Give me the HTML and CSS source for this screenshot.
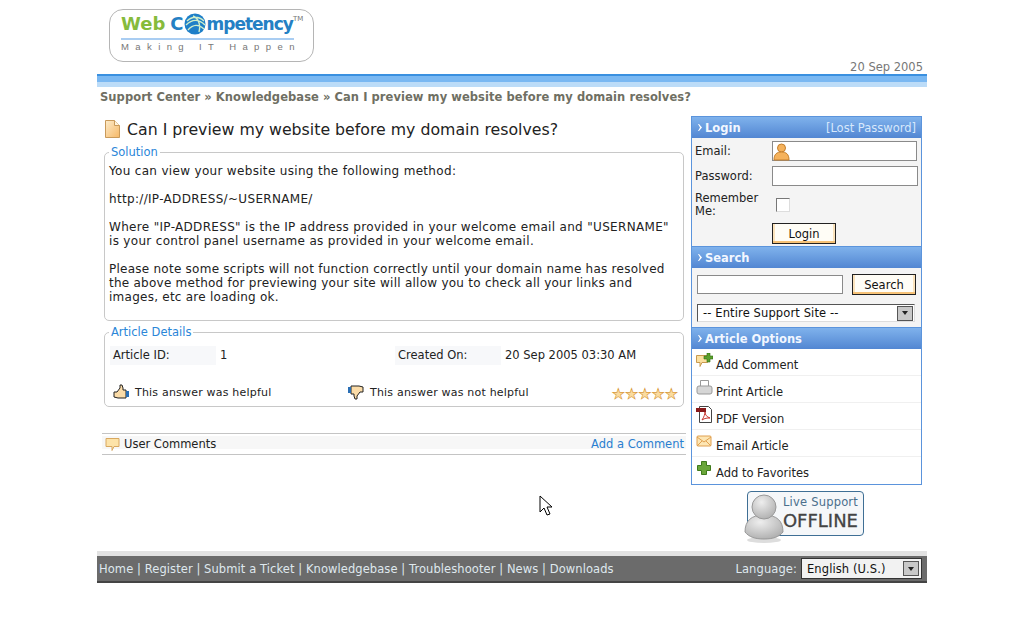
FILE: index.html
```html
<!DOCTYPE html>
<html lang="en">
<head>
  <meta charset="UTF-8" />
  <title>Can I preview my website before my domain resolves?</title>
  <link rel="stylesheet" href="styles.css">
</head>
<body>
  <div class="page">
    <div class="header">
      <div class="logo">
        <div class="logo-name"><span class="green">Web</span><span class="blue c">C</span><svg class="globe" width="22" height="22" viewBox="0 0 22 22"><circle cx="11" cy="11" r="10.500" fill="#1e7fc8"/><path d="M3 8c5-5 12-5 17 0M2 12c6-6 13-6 19 0M4 17c5-6 11-6 16-1M9 3c5 2 8 8 6 16" fill="none" stroke="#cfeecb" stroke-width="1.400"/></svg><span class="blue rest">mpetency</span><sup>TM</sup></div>
        <div class="logo-line"></div>
        <div class="logo-tag">Making IT Happen</div>
      </div>
      <div class="date">20 Sep 2005</div>
    </div>
    <div class="stripe"></div>
    <div class="crumbs">Support Center » Knowledgebase » Can I preview my website before my domain resolves?</div>

    <div class="columns">
      <div class="main">
        <h1>
          <svg width="15" height="18" viewBox="0 0 15 18"><defs><linearGradient id="doc" x1="0" y1="0" x2="1" y2="1"><stop offset="0" stop-color="#fdeccb"/><stop offset="1" stop-color="#f6b866"/></linearGradient></defs><path d="M.5.5h9l5 5v12H.5z" fill="url(#doc)" stroke="#c99a5a"/><path d="M9.500.5v5h5" fill="#fff3dc" stroke="#c99a5a"/></svg>
          Can I preview my website before my domain resolves?
        </h1>

        <fieldset class="box solution">
          <legend>Solution</legend>
          <p>You can view your website using the following method:</p>
          <p>http://IP-ADDRESS/~USERNAME/</p>
          <p>Where "IP-ADDRESS" is the IP address provided in your welcome email and "USERNAME" is your control panel username as provided in your welcome email.</p>
          <p>Please note some scripts will not function correctly until your domain name has resolved the above method for previewing your site will allow you to check all your links and images, etc are loading ok.</p>
        </fieldset>

        <fieldset class="box details">
          <legend>Article Details</legend>
          <div class="meta">
            <span class="meta-label">Article ID:</span><span class="meta-value id">1</span>
            <span class="meta-label">Created On:</span><span class="meta-value">20 Sep 2005 03:30 AM</span>
          </div>
          <div class="rating">
            <span class="vote up">
              <svg width="16" height="16" viewBox="0 0 16 16"><path d="M1 8h3l3-4V1h2l1 3v2h3v8H5l-4-1z" fill="#fbdca8" stroke="#222"/><path d="M13 7h3v6h-3z" fill="#2a6fb5"/></svg>
              This answer was helpful
            </span>
            <span class="vote down">
              <svg width="16" height="16" viewBox="0 0 16 16"><path d="M15 8h-3l-3 4v3H7l-1-3v-2H3V2h8l4 1z" fill="#fbdca8" stroke="#222"/><path d="M0 3h3v6H0z" fill="#2a6fb5"/></svg>
              This answer was not helpful
            </span>
            <span class="stars">★★★★★</span>
          </div>
        </fieldset>

        <div class="comments">
          <span class="comments-title">
            <svg width="15" height="15" viewBox="0 0 15 15"><path d="M1 1.500h13v8H9l-2 4v-4H1z" fill="#fde3a8" stroke="#d8a860"/></svg>
            User Comments
          </span>
          <a href="#">Add a Comment</a>
        </div>
      </div>

      <div class="side">
        <div class="panel">
          <div class="panel-head"><span class="head-title"><svg width="6" height="7" viewBox="0 0 6 7"><path d="M1 0h1l3 3.500-3 3.500H1l2-3.500z" fill="#fff"/></svg>Login</span><a href="#">[Lost Password]</a></div>
          <div class="panel-body login">
            <label>Email:</label>
            <div class="field email">
              <svg width="17" height="18" viewBox="0 0 17 18"><circle cx="8.500" cy="5" r="4" fill="#f5b25c" stroke="#c47f2c"/><path d="M1 17c0-6 3-8 7.500-8s7.500 2 7.500 8z" fill="#f5b25c" stroke="#c47f2c"/></svg>
            </div>
            <label>Password:</label>
            <div class="field"></div>
            <label class="remember">Remember Me:</label>
            <div class="check-row"><span class="check"></span></div>
            <span></span>
            <div><button class="btn">Login</button></div>
          </div>
        </div>

        <div class="panel">
          <div class="panel-head"><span class="head-title"><svg width="6" height="7" viewBox="0 0 6 7"><path d="M1 0h1l3 3.500-3 3.500H1l2-3.500z" fill="#fff"/></svg>Search</span></div>
          <div class="panel-body search">
            <div class="search-row"><div class="field query"></div><button class="btn">Search</button></div>
            <div class="select wide">-- Entire Support Site --<span class="arrow"></span></div>
          </div>
        </div>

        <div class="panel">
          <div class="panel-head"><span class="head-title"><svg width="6" height="7" viewBox="0 0 6 7"><path d="M1 0h1l3 3.500-3 3.500H1l2-3.500z" fill="#fff"/></svg>Article Options</span></div>
          <ul class="options">
            <li><svg width="17" height="16" viewBox="0 0 17 16"><path d="M.5 2.500h11v7H6l-2 4v-4H.5z" fill="#fbe0a0" stroke="#c89a50"/><path d="M11 0h3v3h3v3h-3v3h-3V6H8V3h3z" fill="#5aa02c" stroke="#2f6b12" stroke-width=".6"/></svg>Add Comment</li>
            <li><svg width="17" height="16" viewBox="0 0 17 16"><path d="M4.500.5h8v6h-8z" fill="#fff" stroke="#999"/><rect x="1" y="6" width="15" height="8" rx="2" fill="#d6d6d6" stroke="#999"/></svg>Print Article</li>
            <li><svg width="17" height="17" viewBox="0 0 17 17"><path d="M3.500.5h9l3 3v13h-12z" fill="#fff" stroke="#444"/><rect x="0" y="2" width="10" height="4" fill="#8a1a1a"/><path d="M6 14c2-3 3-6 3-8 0 3 2 5 5 6-3 0-5 0-8 2z" fill="none" stroke="#c8332b"/></svg>PDF Version</li>
            <li><svg width="17" height="16" viewBox="0 0 17 16"><rect x="1" y="2" width="14" height="10" rx="1" fill="#fde6b4" stroke="#e0a050"/><path d="M1 3l7 5 7-5M1 12l5-5M15 12l-5-5" fill="none" stroke="#e0a050"/></svg>Email Article</li>
            <li><svg width="17" height="16" viewBox="0 0 17 16"><path d="M5.500.5h5v4h4v5h-4v4h-5v-4h-4v-5h4z" fill="#6aa63a" stroke="#3f7a1c"/></svg>Add to Favorites</li>
          </ul>
        </div>

        <div class="live">
          <svg class="live-man" width="40" height="50" viewBox="0 0 40 50"><defs><radialGradient id="man" cx=".4" cy=".3" r=".8"><stop offset="0" stop-color="#eee"/><stop offset="1" stop-color="#aaa"/></radialGradient></defs><ellipse cx="20" cy="46" rx="17" ry="3" fill="#ddd"/><path d="M1 38c0-11 6-17 19-17s19 6 19 17c-4 5-10 7-19 7s-15-2-19-7z" fill="url(#man)" stroke="#999"/><circle cx="20" cy="13" r="12" fill="url(#man)" stroke="#999"/></svg>
          <div class="live-text"><span>Live Support</span><strong>OFFLINE</strong></div>
        </div>
      </div>
    </div>

    <div class="footer">
      <div class="footer-links">Home | Register | Submit a Ticket | Knowledgebase | Troubleshooter | News | Downloads</div>
      <div class="language">Language: <div class="select lang">English (U.S.)<span class="arrow"></span></div></div>
    </div>
  </div>

  <svg class="cursor" width="14" height="21" viewBox="0 0 14 21"><path d="M1 1v16l4-4 3 7 3-1-3-7h5z" fill="#fff" stroke="#000"/></svg>
</body>
</html>
```

FILE: styles.css
```css
body {
  margin: 0;
  background: #fff;
  font-family: "DejaVu Sans", Verdana, sans-serif;
  font-size: 11.5px;
  color: #222;
}

.page {
  width: 830px;
  margin: 0 auto;
  position: relative;
}

a {
  color: #2a7fd0;
  text-decoration: none;
}

/* header */
.header {
  height: 74px;
  display: flex;
  justify-content: space-between;
  align-items: flex-end;
}

.logo {
  width: 205px;
  height: 53px;
  margin: 0 0 12px 12px;
  border: 1px solid #b5b5b5;
  border-radius: 14px;
  box-sizing: border-box;
  padding: 3px 0 0 11px;
}

.logo-name {
  font-size: 18px;
  font-weight: bold;
  line-height: 22px;
  white-space: nowrap;
}

.logo-name .c {
  margin-left: 5px;
}

.logo-name .rest {
  font-size: 17px;
  letter-spacing: -1px;
  margin-left: 1px;
}

.logo-name sup {
  font-size: 7px;
  font-weight: normal;
  color: #777;
  vertical-align: 9px;
  line-height: 0;
}

.globe {
  vertical-align: -5px;
}

.green { color: #86bb3c; }
.blue { color: #2480c4; }

.logo-line {
  width: 173px;
  height: 2px;
  margin-top: 3px;
  background: #a9cdf2;
}

.logo-tag {
  font-family: "Liberation Sans", Arial, sans-serif;
  font-size: 9.5px;
  color: #777;
  letter-spacing: 6.4px;
  margin-top: 1px;
  white-space: nowrap;
}

.date {
  color: #777;
  padding-right: 4px;
  line-height: 13px;
}

.stripe {
  height: 13px;
  background: linear-gradient(#3a90e0 0, #3a90e0 2px, #7ab8f2 2px, #7ab8f2 8px, #bcdcf8 8px);
}

.crumbs {
  font-weight: bold;
  color: #6f6f63;
  padding: 3px 3px 0;
  line-height: 14px;
  letter-spacing: 0.06px;
}

/* columns */
.columns {
  display: flex;
  justify-content: space-between;
  padding: 12px 5px 0 5px;
  height: 447px;
  box-sizing: border-box;
}

.main {
  width: 584px;
}

h1 {
  font-size: 15.75px;
  font-weight: normal;
  margin: 0;
  display: flex;
  align-items: flex-start;
  gap: 7px;
  padding: 4px 0 0 3px;
  height: 25px;
  line-height: 20px;
}

.box {
  margin: 0 2px 0 2px;
  border: 1px solid #c8c8c8;
  border-radius: 5px;
  padding: 0 4px;
  min-width: 0;
}

.box legend {
  color: #2a86d8;
  padding: 0 2px;
  margin-left: 0;
  line-height: 14px;
}

.solution {
  height: 169px;
  margin-top: 0;
  box-sizing: content-box;
  padding-top: 5px;
}

.solution p {
  margin: 0 0 14px 0;
  line-height: 14px;
  font-size: 12px;
  letter-spacing: 0.32px;
}

.solution p:last-child {
  letter-spacing: 0.25px;
}

.details {
  margin-top: 4px;
  height: 80px;
}

.meta {
  display: flex;
  margin: 7px 0 0 1px;
  align-items: center;
  line-height: 19px;
}

.meta-label {
  width: 106px;
  padding-left: 3px;
  box-sizing: border-box;
  background: #f7f8fa;
}

.meta-value {
  padding-left: 4px;
}

.meta-value.id {
  width: 179px;
  box-sizing: border-box;
}

.rating {
  display: flex;
  align-items: center;
  margin-top: 18px;
  padding-left: 4px;
  font-size: 11px;
  letter-spacing: 0.2px;
}

.vote {
  display: flex;
  align-items: center;
  gap: 6px;
}

.vote.up {
  width: 235px;
}

.stars {
  margin: 4px 1px 0 auto;
  color: #fbdca0;
  -webkit-text-stroke: 0.6px #d99a3c;
  font-size: 14.8px;
  line-height: 14px;
  letter-spacing: 0;
}

.comments {
  margin-top: 26px;
  border-top: 1px solid #c4c4c4;
  border-bottom: 1px solid #c4c4c4;
  height: 20px;
  display: flex;
  justify-content: space-between;
  align-items: center;
  padding: 0 2px 0 3px;
  background: linear-gradient(#fff 0, #fff 2px, #f7f7f7 2px, #f7f7f7 15px, #fff 15px);
}

.comments-title {
  display: flex;
  align-items: center;
  gap: 4px;
}

/* side panels */
.side {
  width: 231px;
}

.panel {
  border: 1px solid #5b94dc;
  border-bottom: 0;
}

.panel:nth-child(3) {
  border-bottom: 1px solid #5b94dc;
}

.panel-head {
  height: 21px;
  display: flex;
  justify-content: space-between;
  align-items: center;
  padding: 0 5px 0 5px;
  background: linear-gradient(#7fb2ec, #5286d2);
  color: #f2f7ff;
  font-weight: bold;
}

.head-title {
  display: flex;
  align-items: center;
  gap: 2px;
}

.panel-head a {
  font-weight: normal;
  color: #d7e8fc;
}

.panel-body {
  background: #f4f4f4;
  box-sizing: border-box;
}

.login {
  display: grid;
  grid-template-columns: 77px 1fr;
  align-items: center;
  row-gap: 5px;
  padding: 3px 3px 3px 3px;
  height: 108px;
}

.remember {
  line-height: 13px;
  padding-top: 1px;
}

.field {
  height: 20px;
  background: #fff;
  border: 1px solid #8a8a8a;
  box-sizing: border-box;
}

.email {
  width: 145px;
}

.email svg {
  display: block;
  margin-top: 1px;
}

.check-row {
  padding-left: 4px;
}

.check {
  display: block;
  width: 12px;
  height: 12px;
  border: 1px solid #777;
  border-right-color: #ddd;
  border-bottom-color: #ddd;
  background: #fff;
}

.btn {
  font: inherit;
  color: #111;
  height: 21px;
  width: 64px;
  padding: 0;
  background: #fffdf6;
  border: 1px solid #222;
  box-shadow: inset 0 -2px 0 #f6c277, inset 2px 0 0 #fbe3bc, inset -2px 0 0 #fbe3bc;
}

.search {
  padding: 6px 5px 0 5px;
  height: 59px;
}

.search-row {
  display: flex;
  justify-content: space-between;
  align-items: center;
}

.query {
  width: 146px;
  height: 19px;
}

.select {
  display: flex;
  justify-content: space-between;
  align-items: center;
  background: #fff;
  border: 1px solid #555;
  border-right-color: #ddd;
  border-bottom-color: #ddd;
  box-sizing: border-box;
  white-space: nowrap;
  color: #111;
}

.wide {
  height: 18px;
  width: 218px;
  margin-top: 9px;
  padding: 0 1px 0 5px;
  letter-spacing: 0.12px;
}

.arrow {
  width: 16px;
  height: 15px;
  background: #c8c8c8;
  border: 1px solid #555;
  box-sizing: border-box;
  display: flex;
  align-items: center;
  justify-content: center;
}

.arrow::after {
  content: "";
  border: 3px solid transparent;
  border-top: 4px solid #222;
  border-bottom: 0;
}

.options {
  list-style: none;
  margin: 0;
  padding: 0;
}

.options li {
  height: 27px;
  box-sizing: border-box;
  border-bottom: 1px solid #f0f0f0;
  padding-left: 4px;
  display: flex;
  align-items: flex-end;
  padding-bottom: 3px;
}

.options li:last-child {
  border-bottom: 0;
  padding-bottom: 4px;
}

.options svg {
  margin: 0 3px 3px 0;
  flex: none;
}

.live {
  width: 117px;
  height: 45px;
  margin: 6px 0 0 56px;
  border: 1px solid #3f6f95;
  border-radius: 4px;
  background: #f5f7f9;
  position: relative;
  box-sizing: border-box;
  display: flex;
  justify-content: flex-end;
}

.live-man {
  position: absolute;
  left: -4px;
  top: 2px;
}

.live-text {
  display: flex;
  flex-direction: column;
  align-items: flex-end;
  padding: 3px 5px 0 0;
  color: #4a6f8c;
  letter-spacing: 0.2px;
}

.live-text strong {
  font-size: 18px;
  font-weight: normal;
  -webkit-text-stroke: 0.3px #444;
  color: #444;
  line-height: 24px;
  letter-spacing: 0;
}

/* footer */
.footer {
  display: flex;
  justify-content: space-between;
  align-items: center;
  height: 32px;
  box-sizing: border-box;
  border-top: 5px solid #e2e2e2;
  border-bottom: 2px solid #444;
  background: #6b6b6b;
  color: #dfe8ee;
  padding: 0 5px 0 2px;
}

.footer-links {
  letter-spacing: 0.08px;
}

.language {
  display: flex;
  align-items: center;
  gap: 4px;
  letter-spacing: 0.1px;
}

.lang {
  width: 121px;
  height: 21px;
  background: #f2f2f2;
  padding: 0 2px 0 5px;
  border-color: #333;
}

/* mouse pointer in the screenshot */
.cursor {
  position: absolute;
  left: 539px;
  top: 495px;
}
```
